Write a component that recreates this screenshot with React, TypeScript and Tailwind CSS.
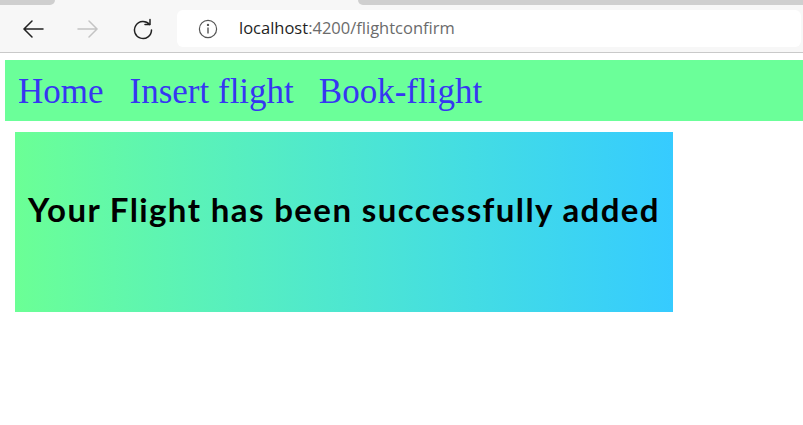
export default function App() {
  return (
    <div className="w-[803px] h-[425px] bg-white overflow-hidden" style={{ fontFamily: '"Open Sans", sans-serif' }}>
      {/* browser chrome */}
      <div className="bg-[#f7f7f7] border-b border-[#c9c9c9]">
        <div className="flex h-[5px]">
          <div className="w-[55px] bg-[#cfcfcf] rounded-br-[5px]" />
          <div className="flex-1" />
          <div className="w-[445px] bg-[#cfcfcf] rounded-bl-[5px]" />
        </div>
        <div className="flex items-center h-[47px]">
          <button className="w-[22px] h-[22px] ml-[22px] flex items-center justify-center">
            <svg width="22" height="22" viewBox="0 0 22 22" fill="none" stroke="#222" strokeWidth="1.5" strokeLinecap="round">
              <path d="M2 11h19M10 3l-8 8 8 8" />
            </svg>
          </button>
          <button className="w-[22px] h-[22px] ml-[33px] flex items-center justify-center">
            <svg width="22" height="22" viewBox="0 0 22 22" fill="none" stroke="#c4c4c4" strokeWidth="1.5" strokeLinecap="round">
              <path d="M1 11h19M12 3l8 8-8 8" />
            </svg>
          </button>
          <button className="w-[22px] h-[22px] ml-[33px] flex items-center justify-center">
            <svg width="22" height="22" viewBox="0 0 22 22" fill="none" stroke="#222" strokeWidth="1.5" strokeLinecap="round" strokeLinejoin="round">
              <path d="M17.5 6.5A8.5 8.5 0 1 0 19.5 12" />
              <path d="M18 1.5v5h-5" />
            </svg>
          </button>
          <div className="flex items-center ml-[23px] h-[37px] flex-1 mr-[2px] bg-white rounded-[6px]">
            <svg className="ml-[21px]" width="20" height="20" viewBox="0 0 20 20" fill="none" stroke="#555" strokeWidth="1.2">
              <circle cx="10" cy="10" r="8.6" />
              <path d="M10 8.5v6" strokeWidth="1.4" />
              <circle cx="10" cy="5.9" r="0.6" fill="#555" />
            </svg>
            <span className="ml-[21px] text-[16.5px] text-[#1f1f1f] leading-none">
              localhost<span className="text-[#6b6b6b]">:4200/flightconfirm</span>
            </span>
          </div>
        </div>
      </div>

      {/* page */}
      <nav
        className="mt-[7px] ml-[5px] h-[61px] bg-[#6bff99] flex items-center gap-[26px] pl-[13px] pt-[1px]"
        style={{ fontFamily: '"Liberation Serif", serif' }}
      >
        <a className="text-[35px] text-[#3636f2] leading-none">Home</a>
        <a className="text-[35px] text-[#3636f2] leading-none">Insert flight</a>
        <a className="text-[35px] text-[#3636f2] leading-none -ml-[1px]">Book-flight</a>
      </nav>

      <div className="mt-[11px] ml-[15px] w-[658px] h-[180px] bg-gradient-to-r from-[#6bff95] to-[#36cbff] pt-[61px] flex justify-center">
        <h1 className="text-[33px] font-bold leading-[32px] text-black tracking-[1.4px] whitespace-nowrap" style={{ fontFamily: 'Lato, sans-serif' }}>
          Your Flight has been successfully added
        </h1>
      </div>
    </div>
  );
}
